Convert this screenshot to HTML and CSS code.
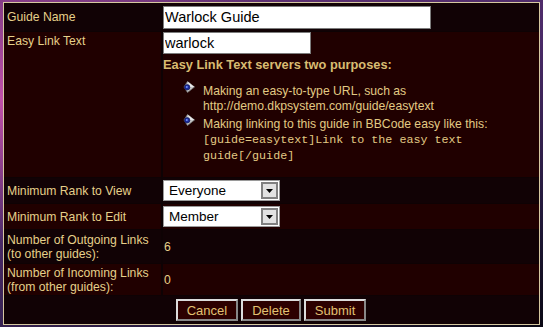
FILE: index.html
```html
<!DOCTYPE html>
<html lang="en">
<head>
    <meta charset="UTF-8">
    <title>Edit Guide</title>
    <link rel="stylesheet" href="styles.css">
</head>
<body>

    <table class="guide-form">
        <tr class="row-dark row-name">
            <td class="label">Guide Name</td>
            <td class="value"><input class="text-input input-name" type="text" value="Warlock Guide"></td>
        </tr>
        <tr class="row-red">
            <td class="label label-top">Easy Link Text</td>
            <td class="value value-top">
                <input class="text-input input-easy" type="text" value="warlock">
                <div class="help-title">Easy Link Text servers two purposes:</div>
                <ul class="help-list">
                    <li>
                        <svg class="bullet" width="12" height="12" viewBox="0 0 12 12">
                            <polygon points="4.5,0.5 11.5,6 4.5,11.5 1,6" fill="#c4c4c4" stroke="#707070" stroke-width="0.8"/>
                            <polygon points="4.5,0.5 11.5,6 7,6" fill="#e8e8e8"/>
                            <circle cx="4.2" cy="6.3" r="2.7" fill="#1a2a98" stroke="#0a1050" stroke-width="0.6"/>
                            <circle cx="3.8" cy="5.9" r="1" fill="#7090ff"/>
                        </svg>
                        Making an easy-to-type URL, such as http://demo.dkpsystem.com/guide/easytext
                    </li>
                    <li>
                        <svg class="bullet" width="12" height="12" viewBox="0 0 12 12">
                            <polygon points="4.5,0.5 11.5,6 4.5,11.5 1,6" fill="#c4c4c4" stroke="#707070" stroke-width="0.8"/>
                            <polygon points="4.5,0.5 11.5,6 7,6" fill="#e8e8e8"/>
                            <circle cx="4.2" cy="6.3" r="2.7" fill="#1a2a98" stroke="#0a1050" stroke-width="0.6"/>
                            <circle cx="3.8" cy="5.9" r="1" fill="#7090ff"/>
                        </svg>
                        Making linking to this guide in BBCode easy like this: <code>[guide=easytext]Link to the easy text guide[/guide]</code>
                    </li>
                </ul>
            </td>
        </tr>
        <tr class="row-dark row-view">
            <td class="label">Minimum Rank to View</td>
            <td class="value">
                <div class="select-box">
                    <select>
                        <option>Everyone</option>
                        <option>Member</option>
                    </select>
                    <span class="select-arrow">
                        <svg width="7" height="4" viewBox="0 0 7 4"><polygon points="0,0 7,0 3.5,4" fill="#000"/></svg>
                    </span>
                </div>
            </td>
        </tr>
        <tr class="row-red row-edit">
            <td class="label">Minimum Rank to Edit</td>
            <td class="value">
                <div class="select-box">
                    <select>
                        <option>Member</option>
                        <option>Everyone</option>
                    </select>
                    <span class="select-arrow">
                        <svg width="7" height="4" viewBox="0 0 7 4"><polygon points="0,0 7,0 3.5,4" fill="#000"/></svg>
                    </span>
                </div>
            </td>
        </tr>
        <tr class="row-dark row-out">
            <td class="label">Number of Outgoing Links<br>(to other guides):</td>
            <td class="value count">6</td>
        </tr>
        <tr class="row-red row-in">
            <td class="label">Number of Incoming Links<br>(from other guides):</td>
            <td class="value count">0</td>
        </tr>
        <tr class="row-dark row-buttons">
            <td colspan="2">
                <div class="buttons">
                    <button class="btn" type="button">Cancel</button>
                    <button class="btn" type="button">Delete</button>
                    <button class="btn" type="submit">Submit</button>
                </div>
            </td>
        </tr>
    </table>

</body>
</html>
```

FILE: styles.css
```css
body {
    margin: 2px 0 0 3px;
    font-family: 'Liberation Sans', Arial, sans-serif;
    font-size: 12.2px;
    background:
        radial-gradient(ellipse at 0% 30%, #c050a8 0%, rgba(160, 60, 140, 0) 45%),
        linear-gradient(160deg, #6a3478 0%, #4a2a68 45%, #201838 80%, #0a0814 100%);
    min-height: 325px;
}

.guide-form {
    width: 537px;
    border: 1px solid #d6c8a0;
    border-spacing: 0;
    background: #0e0204;
}

.guide-form td {
    padding: 0;
    color: #e6d08a;
    line-height: 14px;
    border-top: 1px solid #0e0204;
}

.guide-form tr:first-child td {
    border-top: 0;
}

.row-dark td {
    background: #110205;
}

.row-red td {
    background: #200000;
}

.label {
    width: 154px;
    padding-left: 3px !important;
    vertical-align: middle;
}

.label-top {
    vertical-align: top;
    padding-top: 2px !important;
}

.value {
    border-left: 2px solid #0e0204;
    vertical-align: middle;
}

.value-top {
    vertical-align: top;
}

.row-name td { height: 28px; }
.row-view td { height: 25px; }
.row-edit td { height: 25px; }
.row-out td { height: 33px; }
.row-in td { height: 31px; }
.row-buttons td { height: 28px; }

.count {
    padding-left: 1px !important;
}

.text-input {
    display: block;
    box-sizing: border-box;
    margin: 0;
    padding: 0 1px;
    border: 1px solid #7c7c7c;
    background: #fff;
    color: #000;
    font-family: 'Liberation Sans', Arial, sans-serif;
    font-size: 14.5px;
    outline: none;
}

.input-name {
    width: 268px;
    height: 23px;
}

.input-easy {
    width: 148px;
    height: 22px;
}

.help-title {
    margin-top: 3px;
    font-size: 12.8px;
    font-weight: bold;
    line-height: 15px;
    color: #d8bc72;
}

.help-list {
    margin: 12px 0 13px 0;
    padding-left: 40px;
    list-style: none;
}

.help-list li {
    position: relative;
    line-height: 15px;
    color: #e2ca84;
}

.help-list li + li {
    margin-top: 3px;
}

.help-list code {
    font-family: 'Liberation Mono', 'Courier New', monospace;
    font-size: 11.7px;
}

.bullet {
    position: absolute;
    left: -20px;
    top: -3px;
}

.select-box {
    position: relative;
    width: 117px;
    height: 21px;
}

.select-box select {
    appearance: none;
    -webkit-appearance: none;
    box-sizing: border-box;
    width: 100%;
    height: 100%;
    margin: 0;
    padding: 0 0 0 5px;
    border: 1px solid #9a9a9a;
    border-radius: 0;
    background: #fff;
    color: #000;
    font-family: 'Liberation Sans', Arial, sans-serif;
    font-size: 13.5px;
    outline: none;
}

/* the little grey button sits over the right end of the select */
.select-arrow {
    position: absolute;
    right: 2px;
    top: 2px;
    width: 13px;
    height: 13px;
    border: 2px solid #808080;
    background: #e2e2e2;
    display: flex;
    align-items: center;
    justify-content: center;
    pointer-events: none;
}

.buttons {
    display: flex;
    justify-content: center;
    gap: 3px;
    padding-right: 1px;
}

.btn {
    height: 22px;
    margin: 0;
    padding: 0 9px;
    border: 2px outset #dcdcdc;
    background: #2c0000;
    color: #e2c272;
    font-family: 'Liberation Sans', Arial, sans-serif;
    font-size: 13px;
}
```
